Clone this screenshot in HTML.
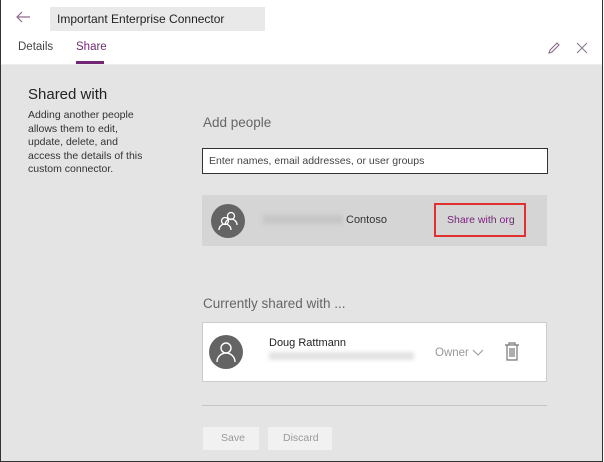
<!DOCTYPE html>
<html><head><style>
*{margin:0;padding:0;box-sizing:border-box}
body{width:604px;height:462px;overflow:hidden;font-family:"Segoe UI","Liberation Sans",sans-serif;background:#fff;position:relative}
.frame{position:absolute;left:0;top:0;width:603px;height:462px;border:1px solid #333;border-top:none;overflow:hidden}
.a{position:absolute;white-space:nowrap}
</style></head><body>
<div class="frame">
<div class="a" style="left:0;top:0;width:604px;height:65px;background:#fff;border-bottom:1px solid #eee"></div>
<svg class="a" style="left:14px;top:10px" width="16" height="14"><path d="M15 7H2M7 2L2 7L7 12" fill="none" stroke="#8c6a8c" stroke-width="1.2"/></svg>
<div class="a" style="left:49px;top:7px;width:215px;height:24px;background:#e9e9e9"></div>
<div class="a" style="left:56px;top:12px;font-size:12px;color:#222">Important Enterprise Connector</div>
<div class="a" style="left:17px;top:41px;font-size:11.5px;color:#444">Details</div>
<div class="a" style="left:75px;top:41px;font-size:11.5px;color:#742774">Share</div>
<div class="a" style="left:75px;top:61px;width:28px;height:3px;background:#742774"></div>
<svg class="a" style="left:546px;top:41px" width="14" height="14"><path d="M2 12L3 9L10 2L12 4L5 11Z" fill="none" stroke="#8a6a8a" stroke-width="1.1"/></svg>
<svg class="a" style="left:575px;top:42px" width="12" height="12"><path d="M1 1L11 11M11 1L1 11" stroke="#8a7a90" stroke-width="1.1"/></svg>
<div class="a" style="left:0;top:65px;width:604px;height:397px;background:#e4e4e4"></div>
<div class="a" style="left:27px;top:86px;font-size:15px;color:#222">Shared with</div>
<div class="a" style="left:27px;top:109px;font-size:10.5px;line-height:13.5px;color:#333">Adding another people<br>allows them to edit,<br>update, delete, and<br>access the details of this<br>custom connector.</div>
<div class="a" style="left:202px;top:115px;font-size:13.5px;color:#666">Add people</div>
<div class="a" style="left:201px;top:148px;width:346px;height:26px;background:#fff;border:1px solid #333"></div>
<div class="a" style="left:208px;top:155px;font-size:10.5px;color:#444">Enter names, email addresses, or user groups</div>
<div class="a" style="left:201px;top:195px;width:345px;height:51px;background:#d5d5d5"></div>
<div class="a" style="left:210px;top:204px;width:34px;height:34px;border-radius:50%;background:#646464"></div>
<svg class="a" style="left:210px;top:204px" width="34" height="34"><g fill="none" stroke="#fff" stroke-width="1.3"><circle cx="20" cy="12" r="3.5"/><path d="M14 21a6 6 0 0 1 12 0"/><circle cx="14" cy="17" r="3.5"/><path d="M8 26a6 6 0 0 1 12 0"/></g></svg>
<div class="a" style="left:262px;top:215px;width:80px;height:9px;background:#c6c6c6;filter:blur(2px)"></div>
<div class="a" style="left:345px;top:214px;font-size:11px;color:#333">Contoso</div>
<div class="a" style="left:433px;top:203px;width:92px;height:34px;border:2px solid #e03030"></div>
<div class="a" style="left:446px;top:214px;font-size:10.5px;color:#742774">Share with org</div>
<div class="a" style="left:202px;top:296px;font-size:13.5px;color:#666">Currently shared with ...</div>
<div class="a" style="left:201px;top:322px;width:345px;height:60px;background:#fff;border:1px solid #ccc"></div>
<div class="a" style="left:208px;top:335px;width:34px;height:34px;border-radius:50%;background:#646464"></div>
<svg class="a" style="left:208px;top:335px" width="34" height="34"><g fill="none" stroke="#fff" stroke-width="1.4"><circle cx="17" cy="13" r="5"/><path d="M8 27a9 9 0 0 1 18 0"/></g></svg>
<div class="a" style="left:268px;top:337px;font-size:11px;color:#222">Doug Rattmann</div>
<div class="a" style="left:268px;top:352px;width:145px;height:8px;background:#e2e2e2;filter:blur(2px)"></div>
<div class="a" style="left:434px;top:347px;font-size:11.5px;color:#999">Owner</div>
<svg class="a" style="left:471px;top:349px" width="12" height="8"><path d="M1 1L6 6L11 1" fill="none" stroke="#999"/></svg>
<svg class="a" style="left:503px;top:342px" width="16" height="19"><g fill="none" stroke="#777" stroke-width="1.2"><path d="M1 3H15M5 3V1H11V3M3 3V18H13V3M6 6V15M8 6V15M10 6V15"/></g></svg>
<div class="a" style="left:201px;top:405px;width:345px;height:1px;background:#c4c4c4"></div>
<div class="a" style="left:202px;top:427px;width:56px;height:23px;background:#f1f1f1"></div>
<div class="a" style="left:220px;top:432px;font-size:10.5px;color:#999">Save</div>
<div class="a" style="left:267px;top:427px;width:64px;height:23px;background:#f1f1f1"></div>
<div class="a" style="left:282px;top:432px;font-size:10.5px;color:#999">Discard</div>
</div>
</body></html>
